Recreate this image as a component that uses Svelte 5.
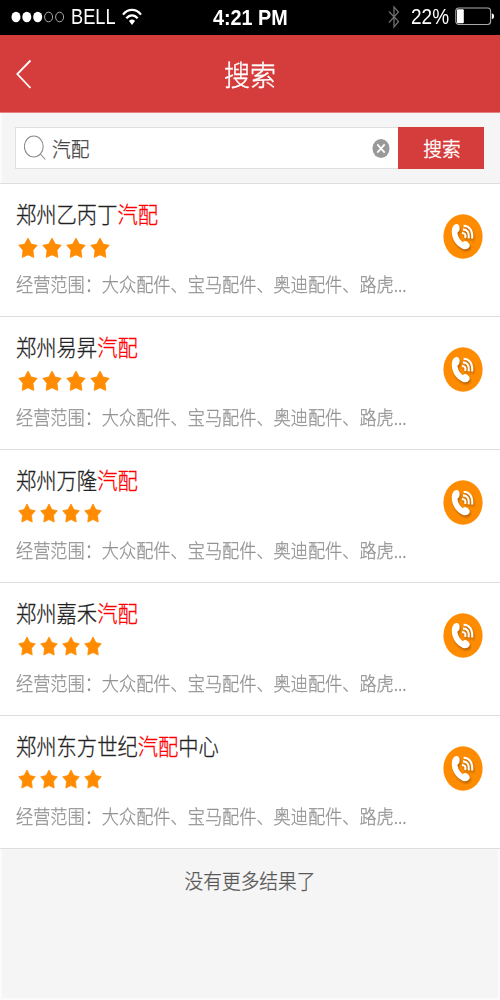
<script>
  const range = '经营范围：大众配件、宝马配件、奥迪配件、路虎...';
  const shops = [
    { before: '郑州乙丙丁', after: '', large: true },
    { before: '郑州易昇', after: '', large: true },
    { before: '郑州万隆', after: '', large: false },
    { before: '郑州嘉禾', after: '', large: false },
    { before: '郑州东方世纪', after: '中心', large: false }
  ];
  const keyword = '汽配';
</script>

<div class="page">
  <div class="status">
    <div class="side">
      <svg class="signal" width="54" height="12" viewBox="0 0 54 12">
        <g fill="#fff">
          <ellipse cx="5" cy="6" rx="4.5" ry="5.2" />
          <ellipse cx="15.8" cy="6" rx="4.5" ry="5.2" />
          <ellipse cx="26.7" cy="6" rx="4.5" ry="5.2" />
        </g>
        <g fill="none" stroke="#bbb" stroke-width="0.9">
          <ellipse cx="37.6" cy="6" rx="4" ry="4.8" />
          <ellipse cx="48.6" cy="6" rx="4" ry="4.8" />
        </g>
      </svg>
      <span class="st carrier">BELL</span>
      <svg class="wifi" width="20" height="18" viewBox="0 0 20 18">
        <g fill="none" stroke="#fff" stroke-width="2.2">
          <path d="M1 6.6C6 .4 14 .4 19 6.6" />
          <path d="M4.4 10.4C7.5 6.4 12.5 6.4 15.6 10.4" />
        </g>
        <path d="M10 17L7 13C8.4 11 11.600 11 13 13Z" fill="#fff" />
      </svg>
    </div>
    <span class="st time">4:21 PM</span>
    <div class="side right">
      <svg class="bt" width="12" height="24" viewBox="0 0 12 24">
        <path d="M1 6.500L10.500 16.500L6 22V2L10.500 7L1 17.500" fill="none" stroke="#6d6d6d" stroke-width="1.3" />
      </svg>
      <span class="st percent">22%</span>
      <svg class="battery" width="40" height="19" viewBox="0 0 40 19">
        <rect x=".8" y="1" width="34.800" height="16.500" rx="3" fill="none" stroke="#aaa" stroke-width="1.1" />
        <rect x="2" y="2.300" width="6.800" height="14" rx="1" fill="#fff" />
        <path d="M36.800 6.500C39.800 6.500 39.800 12 36.800 12Z" fill="#fff" />
      </svg>
    </div>
  </div>

  <header>
    <svg class="back" width="18" height="32" viewBox="0 0 18 32">
      <path d="M15.500 2.500L2.300 16L15.500 30" fill="none" stroke="#fff" stroke-width="1.8" />
    </svg>
    <h1><span class="tall">搜索</span></h1>
  </header>

  <div class="search">
    <div class="field">
      <svg class="lens" width="24" height="26" viewBox="0 0 24 26">
        <g fill="none" stroke="#8d8d8d" stroke-width="1.1">
          <ellipse cx="9.800" cy="11.500" rx="9.400" ry="10.500" />
          <path d="M16.400 19L21.300 24.500" />
        </g>
      </svg>
      <span class="tall query">{keyword}</span>
      <svg class="clear" width="18" height="20" viewBox="0 0 18 20">
        <ellipse cx="9" cy="10.500" rx="8.500" ry="9.500" fill="#999" />
        <path d="M5.300 6.400L12.700 14.600M12.700 6.400L5.300 14.600" stroke="#fff" stroke-width="1.7" />
      </svg>
    </div>
    <button><span class="tall">搜索</span></button>
  </div>

  <ul>
    {#each shops as shop}
      <li>
        <div class="info">
          <div class="name"><span class="tall">{shop.before}<em>{keyword}</em>{shop.after}</span></div>
          <div class="stars" class:large={shop.large}>
            {#each [1, 2, 3, 4] as n (n)}
              <svg viewBox="0 0 20 21" preserveAspectRatio="none">
                <path d="M10 1L13.200 6.900L19.200 8.100L15 12.900L15.800 20L10 17.400L4.200 20L5 12.900L.8 8.100L6.800 6.900Z" fill="#ff8c00" stroke="#ff8c00" stroke-width=".8" stroke-linejoin="round" />
              </svg>
            {/each}
          </div>
          <div class="desc"><span class="tall">{range}</span></div>
        </div>
        <svg class="call" width="40" height="45" viewBox="0 0 40 45">
          <ellipse cx="20" cy="22.500" rx="19.600" ry="22.200" fill="#ff8c00" />
          <g class="shade">
            <path d="M12.600 10.200C14.900 9.400 16.400 11 16.600 13.500C16.800 16 16 17.900 14.500 18.600C14.500 22.500 17 26.200 19.900 28.200C21 26.600 22.800 26.500 24.600 28C26.600 29.800 27.300 31.500 26.300 33C24.800 35.400 22 35.700 19.600 34.700C12.900 31.600 8.700 25 8.800 17.300C8.900 13.500 10.200 10.900 12.600 10.200Z" fill="#fff" />
            <g fill="none" stroke="#fff" stroke-width="2.100">
              <path d="M20.600 11.800C26.500 12 29.800 16.300 29.200 24.500" />
              <path d="M20 15.400C24.400 15.600 26.400 18.400 25.700 24.300" />
              <path d="M19 19C22 19.100 23 20.700 22.200 24" />
            </g>
          </g>
        </svg>
      </li>
    {/each}
  </ul>

  <footer><span class="tall">没有更多结果了</span></footer>
</div>

<style>
  :global(body) { margin: 0; background: #f5f5f5; }
  .page {
    width: 500px;
    height: 1000px;
    display: flex;
    flex-direction: column;
    background: #f5f5f5;
    font-family: "Noto Sans CJK SC", sans-serif;
    font-weight: 300;
    overflow: hidden;
  }
  .tall {
    display: inline-block;
    transform: translateY(-1px) scaleY(1.11);
    white-space: nowrap;
    -webkit-text-stroke: 0.25px currentColor;
  }
  .status {
    box-sizing: border-box;
    height: 35px;
    padding: 0 5px 2px 11px;
    background: #000;
    color: #fff;
    display: grid;
    grid-template-columns: 202px 76px 1fr;
    align-items: center;
    font-family: "Liberation Sans", sans-serif;
    font-weight: 400;
  }
  .side { display: flex; align-items: center; }
  .right { justify-content: flex-end; }
  .st { display: block; line-height: 24px; transform: scaleY(1.17); white-space: nowrap; }
  .carrier { font-size: 18.200px; margin-left: 6px; width: 45px; }
  .wifi { margin-left: 6px; }
  .time { font-size: 19.800px; font-weight: 700; transform: scaleY(1.1); }
  .percent { font-size: 19px; margin-left: 11px; width: 39px; }
  .battery { margin-left: 5px; }
  header {
    box-sizing: border-box;
    height: 78px;
    padding: 0 15px;
    background: #d43d3c;
    border-bottom: 1px solid #e58181;
    color: #fff;
    display: grid;
    grid-template-columns: 40px 1fr 40px;
    align-items: center;
  }
  h1 { margin: 0; font-size: 26px; font-weight: 300; line-height: 40px; text-align: center; }
  h1 .tall { transform: scaleY(1.08); -webkit-text-stroke-width: 0.4px; }
  .search {
    box-sizing: border-box;
    height: 71px;
    padding: 14px 16px 14px 15px;
    border-bottom: 1px solid #dedede;
    display: flex;
    box-shadow: inset 2px 0 #fbfbfb;
  }
  .field {
    box-sizing: border-box;
    flex: 1;
    height: 42px;
    padding: 0 8px;
    border: 1px solid #e0e0e0;
    border-right: 0;
    background: #fff;
    display: flex;
    align-items: center;
  }
  .query { margin-left: 4px; font-size: 18.700px; line-height: 28px; color: #444; transform: translateY(0.5px) scaleY(1.11); }
  .clear { margin-left: auto; }
  button {
    width: 86px;
    height: 42px;
    margin: 0;
    padding: 0 0 0 2px;
    border: 0;
    background: #d43d3c;
    color: #fff;
    font: 300 18.700px/28px "Noto Sans CJK SC", sans-serif;
  }
  button .tall { transform: translateY(0.5px) scaleY(1.11); -webkit-text-stroke-width: 0.4px; }
  ul { margin: 0; padding: 0; list-style: none; background: #fff; }
  li {
    box-sizing: border-box;
    height: 133px;
    padding: 14px 17px 0 16px;
    border-bottom: 1px solid #dedede;
    display: flex;
    justify-content: space-between;
  }
  .name { height: 32px; font-size: 20.300px; line-height: 32px; color: #222; }
  em { font-style: normal; color: #f00; }
  .stars { height: 36px; padding-left: 1.500px; display: flex; align-items: center; gap: 4px; }
  .stars svg { width: 18px; height: 20px; position: relative; top: -1px; }
  .stars.large { padding-left: 2px; }
  .stars.large svg { width: 20px; height: 21.500px; top: 0; }
  .desc { height: 36px; font-size: 17.180px; line-height: 36px; color: #939393; }
  .desc .tall { transform: scaleY(1.11); }
  .call { margin-top: 16px; flex: none; }
  .shade { filter: drop-shadow(1px 2px 1px #b66000); }
  footer {
    flex: 1;
    padding-top: 16px;
    text-align: center;
    font-size: 18.700px;
    line-height: 32px;
    color: #585858;
    box-shadow: inset 2px 0 #fbfbfb, inset -2px -2px #fbfbfb;
  }
</style>
